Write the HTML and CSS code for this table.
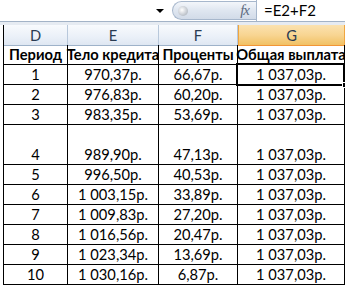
FILE: index.html
```html
<!DOCTYPE html>
<html lang="ru">
<head>
<meta charset="utf-8">
<link rel="stylesheet" href="styles.css">
</head>
<body>
<div class="app">
  <div class="fbar">
    <div class="namebox"><span class="dd"></span></div>
    <div class="pill"><span class="knob"></span><span class="fx">fx</span></div>
    <div class="formula">=E2+F2</div>
  </div>
  <div class="band"></div>
  <div class="sheet">
    <div class="ch">D</div>
    <div class="ch">E</div>
    <div class="ch">F</div>
    <div class="ch ch-sel">G</div>

    <div class="c b">Период</div><div class="c b">Тело кредита</div><div class="c b">Проценты</div><div class="c b">Общая выплата</div>
    <div class="c">1</div><div class="c">970,37р.</div><div class="c">66,67р.</div><div class="c sel">1 037,03р.<span class="handle"></span></div>
    <div class="c">2</div><div class="c">976,83р.</div><div class="c">60,20р.</div><div class="c">1 037,03р.</div>
    <div class="c">3</div><div class="c">983,35р.</div><div class="c">53,69р.</div><div class="c">1 037,03р.</div>
    <div class="c tall">4</div><div class="c tall">989,90р.</div><div class="c tall">47,13р.</div><div class="c tall">1 037,03р.</div>
    <div class="c">5</div><div class="c">996,50р.</div><div class="c">40,53р.</div><div class="c">1 037,03р.</div>
    <div class="c">6</div><div class="c">1 003,15р.</div><div class="c">33,89р.</div><div class="c">1 037,03р.</div>
    <div class="c">7</div><div class="c">1 009,83р.</div><div class="c">27,20р.</div><div class="c">1 037,03р.</div>
    <div class="c">8</div><div class="c">1 016,56р.</div><div class="c">20,47р.</div><div class="c">1 037,03р.</div>
    <div class="c">9</div><div class="c">1 023,34р.</div><div class="c">13,69р.</div><div class="c">1 037,03р.</div>
    <div class="c">10</div><div class="c">1 030,16р.</div><div class="c">6,87р.</div><div class="c">1 037,03р.</div>
  </div>
</div>
</body>
</html>
```
FILE: styles.css
```css
* { box-sizing: border-box; }
html, body { margin: 0; padding: 0; background: #fff; }
body { width: 345px; height: 287px; overflow: hidden; font-family: "Lato", "Noto Sans", sans-serif; }

.fbar {
  display: flex;
  height: 22px;
  border-bottom: 1px solid #a3b3c7;
  background: #fff;
}
.namebox {
  flex: 0 0 172px;
  display: flex;
  align-items: center;
  justify-content: flex-end;
  padding-right: 8px;
}
.dd {
  width: 0; height: 0;
  border-left: 4px solid transparent;
  border-right: 4px solid transparent;
  border-top: 4px solid #000;
}
.pill {
  flex: 0 0 84px;
  margin: 1px 0 1px;
  display: flex;
  align-items: center;
  justify-content: space-between;
  padding: 0 7px 0 5px;
  border: 1px solid #a7b7cc;
  border-right: none;
  border-radius: 10px 0 0 10px;
  background: linear-gradient(#f3f6fa, #dfe6f0 50%, #d2dbe8);
}
.knob {
  width: 10px; height: 10px;
  border-radius: 50%;
  background: radial-gradient(circle at 40% 40%, #ffffff, #c4c9d0 60%, #9ea5ae);
}
.fx {
  font-family: "Liberation Serif", serif;
  font-style: italic;
  font-size: 15px;
  color: #5d6b7f;
  letter-spacing: -1px;
  line-height: 1;
}
.formula {
  flex: 1;
  border-left: 1px solid #a7b7cc;
  padding-left: 7px;
  font-size: 15px;
  line-height: 21px;
  color: #000;
}
.band { height: 3px; background: #e6ebf2; }

.sheet {
  margin-left: 3px;
  display: grid;
  grid-template-columns: 64px 91px 79px 107px;
  grid-auto-rows: 20px;
  border-left: 1px solid #000;
  font-size: 14.7px;
  color: #000;
}
.ch {
  height: 21px;
  display: flex;
  align-items: center;
  justify-content: center;
  background: linear-gradient(#f8fafd, #eaf0f8 60%, #dfe7f2);
  border-right: 1px solid #b8c8db;
  border-bottom: 1px solid #9eb2c9;
  color: #2a3b52;
  font-size: 14.7px;
}
.ch-sel {
  background: linear-gradient(#fbe2b0, #f8d592 50%, #f1c164);
  border-right-color: #f0a640;
  border-bottom-color: #f29536;
  border-left: 1px solid #f0a640;
}
.c {
  display: flex;
  align-items: flex-end;
  justify-content: center;
  border-right: 1px solid #000;
  border-bottom: 1px solid #000;
  padding-bottom: 1px;
  line-height: 17px;
  white-space: nowrap;
}
.b { font-weight: bold; }
.tall { grid-row: span 2; }
.sel { position: relative; }
.sel::after {
  content: "";
  position: absolute;
  top: -2px; left: -2px; right: -1px; bottom: -2px;
  border: 2px solid #000;
}
.handle {
  position: absolute;
  right: -4px; bottom: -4px;
  width: 6px; height: 6px;
  background: #000;
  border: 1px solid #fff;
  z-index: 2;
}
```
